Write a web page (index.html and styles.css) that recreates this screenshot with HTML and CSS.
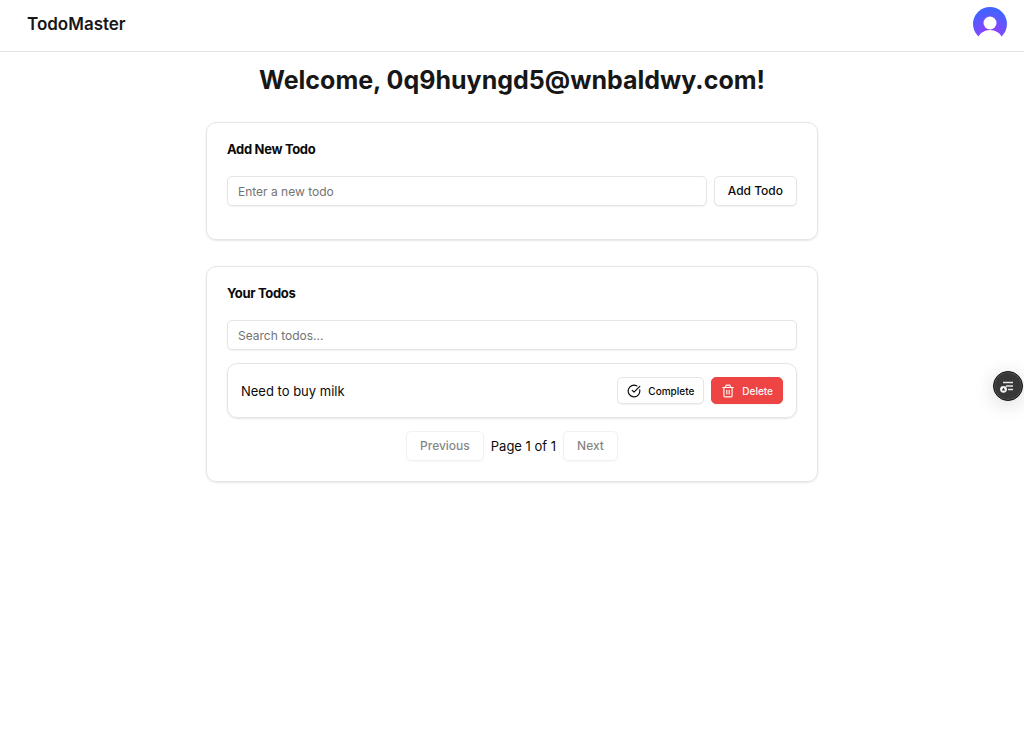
FILE: index.html
```html
<!DOCTYPE html>
<html lang="en">
<head>
  <meta charset="UTF-8">
  <meta name="viewport" content="width=device-width, initial-scale=1">
  <title>TodoMaster</title>
  <link rel="stylesheet" href="styles.css">
</head>
<body>
  <header class="navbar">
    <a class="brand" href="#">TodoMaster</a>
    <button class="avatar" type="button" aria-label="Open user menu">
      <svg viewBox="0 0 34 34" aria-hidden="true">
        <defs>
          <radialGradient id="avatarFill" cx="0.5" cy="0.85" r="0.75">
            <stop offset="0" stop-color="#9a3dfb"/>
            <stop offset="0.4" stop-color="#7f48ff"/>
            <stop offset="1" stop-color="#4263ff"/>
          </radialGradient>
        </defs>
        <circle cx="17" cy="17" r="17" fill="url(#avatarFill)"/>
        <circle cx="17" cy="16" r="6.5" fill="#fff"/>
        <ellipse cx="17" cy="36" rx="13.5" ry="13" fill="#fff"/>
      </svg>
    </button>
  </header>

  <main class="container">
    <h1 class="welcome">Welcome, 0q9huyngd5@wnbaldwy.com!</h1>

    <section class="card card-add">
      <h2 class="card-title">Add New Todo</h2>
      <form class="add-form">
        <input class="input" type="text" placeholder="Enter a new todo" aria-label="New todo">
        <button class="btn" type="submit">Add Todo</button>
      </form>
    </section>

    <section class="card">
      <h2 class="card-title">Your Todos</h2>
      <input class="input" type="text" placeholder="Search todos..." aria-label="Search todos">
      <ul class="todo-list">
        <li class="todo">
          <span class="todo-text">Need to buy milk</span>
          <div class="todo-actions">
            <button class="btn btn-sm" type="button">
              <svg class="icon" viewBox="0 0 24 24" aria-hidden="true">
                <path d="M21.801 10A10 10 0 1 1 17 3.335"/>
                <path d="m9 11 3 3L22 4"/>
              </svg>
              Complete
            </button>
            <button class="btn btn-sm btn-danger" type="button">
              <svg class="icon" viewBox="0 0 24 24" aria-hidden="true">
                <path d="M3 6h18"/>
                <path d="M19 6v14c0 1-1 2-2 2H7c-1 0-2-1-2-2V6"/>
                <path d="M8 6V4c0-1 1-2 2-2h4c1 0 2 1 2 2v2"/>
                <path d="M10 11v6"/>
                <path d="M14 11v6"/>
              </svg>
              Delete
            </button>
          </div>
        </li>
      </ul>
      <nav class="pagination" aria-label="Pagination">
        <button class="btn" type="button" disabled>Previous</button>
        <span>Page 1 of 1</span>
        <button class="btn" type="button" disabled>Next</button>
      </nav>
    </section>
  </main>

  <button class="floating" type="button" aria-label="Open side panel">
    <svg viewBox="0 0 28 28" aria-hidden="true">
      <path d="M9 10.500h10M12 14h7M14 17.500h5" fill="none" stroke="#e5e5e5" stroke-width="1.300"/>
      <circle cx="9.500" cy="17.300" r="3.400" fill="#f5f5f5"/>
      <path d="M9.500 15.500l1.700 2.900h-3.400z" fill="#333"/>
    </svg>
  </button>
</body>
</html>
```

FILE: styles.css
```css
* {
  box-sizing: border-box;
}
body {
  margin: 0;
  background: #fff;
  color: #0a0a0a;
  font: 13px/20px Inter, "Liberation Sans", sans-serif;
}
h1, h2, ul {
  margin: 0;
  padding: 0;
}
button, input {
  font: inherit;
  color: inherit;
}

/* Header */
.navbar {
  display: flex;
  align-items: center;
  justify-content: space-between;
  padding: 7px 17px 10px 27px;
  border-bottom: 1px solid #e5e5e5;
}
.brand {
  color: #171717;
  font-size: 17px;
  font-weight: 600;
  line-height: 24px;
  text-decoration: none;
}
.avatar {
  width: 34px;
  height: 34px;
  padding: 0;
  border: 0;
  border-radius: 50%;
  background: none;
  cursor: pointer;
}
.avatar svg {
  display: block;
}

/* Page */
.container {
  display: flex;
  flex-direction: column;
  gap: 26px;
  max-width: 640px;
  margin: 0 auto;
  padding: 13px 14px;
}
.welcome {
  color: #171717;
  font-size: 25px;
  font-weight: 700;
  line-height: 31px;
  text-align: center;
}
.card {
  padding: 19px 20px 20px;
  border: 1px solid #e5e5e5;
  border-radius: 10px;
  box-shadow: 0 1px 2px rgba(0, 0, 0, 0.1);
}
.card-add {
  padding-bottom: 33px;
}
.card-title {
  margin-bottom: 20px;
  font-size: 13px;
  font-weight: 700;
  line-height: 14px;
  letter-spacing: -0.025em;
}

/* Controls */
.input {
  display: block;
  width: 100%;
  min-width: 0;
  height: 30px;
  padding: 0 10px;
  border: 1px solid #e5e5e5;
  border-radius: 5px;
  background: none;
  box-shadow: 0 1px 1px rgba(0, 0, 0, 0.05);
  font-size: 12px;
}
.input::placeholder {
  color: #737373;
  opacity: 1;
}
.add-form {
  display: flex;
  gap: 7px;
}
.btn {
  display: inline-flex;
  align-items: center;
  justify-content: center;
  gap: 7px;
  height: 30px;
  padding: 0 13px;
  border: 1px solid #e5e5e5;
  border-radius: 5px;
  background: #fff;
  box-shadow: 0 1px 1px rgba(0, 0, 0, 0.05);
  font-size: 12px;
  font-weight: 500;
  white-space: nowrap;
  cursor: pointer;
}
.btn:disabled {
  opacity: 0.5;
  cursor: default;
}
.btn-sm {
  height: 27px;
  padding: 0 9px;
  font-size: 10px;
}
.btn-danger {
  border-color: #ef4444;
  background: #ef4444;
  color: #fafafa;
}
.icon {
  width: 14px;
  height: 14px;
  fill: none;
  stroke: currentColor;
  stroke-width: 2;
  stroke-linecap: round;
  stroke-linejoin: round;
}

/* Todo list */
.todo-list {
  margin: 13px 0;
  list-style: none;
}
.todo {
  display: flex;
  align-items: center;
  justify-content: space-between;
  padding: 13px;
  border: 1px solid #e5e5e5;
  border-radius: 10px;
  box-shadow: 0 1px 2px rgba(0, 0, 0, 0.1);
}
.todo-actions {
  display: flex;
  gap: 7px;
}
.pagination {
  display: flex;
  align-items: center;
  justify-content: center;
  gap: 7px;
}

/* Side button */
.floating {
  position: fixed;
  top: 371px;
  right: 1px;
  width: 30px;
  height: 30px;
  padding: 0;
  border: 1px solid #111;
  border-radius: 50%;
  background: #383838;
  box-shadow: inset 0 0 0 1px #555, 0 4px 20px rgba(0, 0, 0, 0.15);
  cursor: pointer;
}
.floating svg {
  display: block;
}
```
